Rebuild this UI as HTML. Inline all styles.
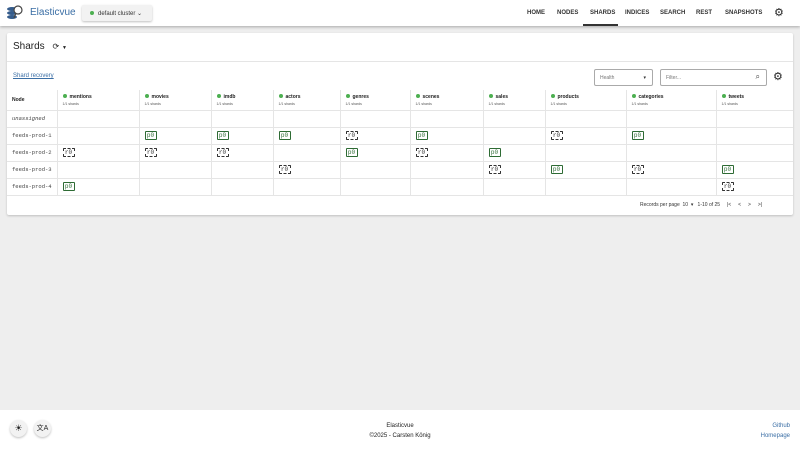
<!DOCTYPE html>
<html><head><meta charset="utf-8"><style>
*{box-sizing:border-box;margin:0;padding:0}
body{width:800px;height:450px;background:#eeeeee;font-family:"Liberation Sans",sans-serif;position:relative;overflow:hidden;color:#222}
.top{position:absolute;left:0;top:0;width:800px;height:26px;background:#fff;box-shadow:0 1px 3px rgba(0,0,0,.3)}
.abs{position:absolute}
.nav{font-size:6px;font-weight:bold;color:#333;top:10px}
.card{position:absolute;left:7px;top:33px;width:786px;height:182px;background:#fff;box-shadow:0 1px 2px rgba(0,0,0,.2);border-radius:2px}
table{position:absolute;left:0;top:57px;border-collapse:collapse;table-layout:fixed}
td{border-bottom:1px solid #e5e5e5;border-left:1px solid #e5e5e5;height:17px;font-size:5px;padding-left:5px;vertical-align:middle}
td:first-child{border-left:none;font-family:"Liberation Mono",monospace;font-size:5.5px;color:#444}
tr.h td{height:20px;font-family:"Liberation Sans",sans-serif}
.n{font-weight:bold;font-size:5px;color:#222}
.n:before{content:"";display:inline-block;width:4px;height:4px;border-radius:50%;background:#4caf50;margin-right:3px;vertical-align:middle}
.s{font-size:3.5px;color:#555;margin-top:2px}
.p,.r{display:inline-block;font-family:"Liberation Mono",monospace;font-size:6px;width:12px;height:9px;text-align:center;border-radius:1px;line-height:7px}
.p{border:1px solid #2e6b34;color:#2e6b34}
.r{border:1px dashed #333;color:#333}
</style></head><body>
<div class="top">
<svg class="abs" style="left:6px;top:4px" width="18" height="18" viewBox="0 0 18 18"><ellipse cx="6" cy="5" rx="5" ry="2" fill="#355c8c"/><ellipse cx="6" cy="9" rx="5" ry="2" fill="#355c8c"/><ellipse cx="6" cy="13" rx="5" ry="2" fill="#355c8c"/><circle cx="12" cy="6" r="4" fill="#fff" stroke="#444" stroke-width="1.2"/><line x1="10" y1="9" x2="8" y2="14" stroke="#444" stroke-width="1.3"/></svg>
<div class="abs" style="left:30px;top:7px;font-size:10px;color:#3a6ea5">Elasticvue</div>
<div class="abs" style="left:82px;top:5px;width:70px;height:16px;background:#f2f2f2;border-radius:2px;box-shadow:0 1px 2px rgba(0,0,0,.25);font-size:6px;color:#333;padding:5px 0 0 8px"><span style="display:inline-block;width:4px;height:4px;border-radius:50%;background:#4caf50;margin-right:4px"></span>default cluster ⌄</div>
<div class="abs nav" style="left:527px">HOME</div>
<div class="abs nav" style="left:557px">NODES</div>
<div class="abs nav" style="left:590px">SHARDS</div>
<div class="abs" style="left:583px;top:24px;width:35px;height:2px;background:#333"></div>
<div class="abs nav" style="left:625px">INDICES</div>
<div class="abs nav" style="left:660px">SEARCH</div>
<div class="abs nav" style="left:696px">REST</div>
<div class="abs nav" style="left:725px">SNAPSHOTS</div>
<div class="abs" style="left:774px;top:6px;font-size:11px;color:#222">⚙</div>
</div>
<div class="card">
<div class="abs" style="left:6px;top:8px;font-size:10px;color:#222">Shards <span style="font-size:8px;margin-left:5px">⟳</span> <span style="font-size:5px">▼</span></div>
<div class="abs" style="left:0;top:28px;width:786px;height:1px;background:#e5e5e5"></div>
<div class="abs" style="left:6px;top:40px;font-size:6px;color:#3a6ea5;text-decoration:underline">Shard recovery</div>
<div class="abs" style="left:587px;top:36px;width:59px;height:17px;border:1px solid #aaa;border-radius:2px;font-size:5px;color:#777;padding:5px 0 0 5px">Health<span style="position:absolute;right:6px;top:5px;color:#333">▾</span></div>
<div class="abs" style="left:653px;top:36px;width:107px;height:17px;border:1px solid #aaa;border-radius:2px;font-size:5px;color:#777;padding:5px 0 0 5px">Filter...<span style="position:absolute;right:6px;top:2px;font-size:8px;color:#444">⌕</span></div>
<div class="abs" style="left:766px;top:37px;font-size:11px;color:#222">⚙</div>
<table>
<colgroup><col style="width:50px"><col style="width:82px"><col style="width:72px"><col style="width:62px"><col style="width:67px"><col style="width:70px"><col style="width:73px"><col style="width:62px"><col style="width:81px"><col style="width:90px"><col style="width:77px"></colgroup>
<tr class="h"><td style="font-family:'Liberation Sans',sans-serif;font-size:5px;font-weight:bold;color:#222">Node</td>
<td><div class="n">mentions</div><div class="s">1/1 shards</div></td>
<td><div class="n">movies</div><div class="s">1/1 shards</div></td>
<td><div class="n">imdb</div><div class="s">1/1 shards</div></td>
<td><div class="n">actors</div><div class="s">1/1 shards</div></td>
<td><div class="n">genres</div><div class="s">1/1 shards</div></td>
<td><div class="n">scenes</div><div class="s">1/1 shards</div></td>
<td><div class="n">sales</div><div class="s">1/1 shards</div></td>
<td><div class="n">products</div><div class="s">1/1 shards</div></td>
<td><div class="n">categories</div><div class="s">1/1 shards</div></td>
<td><div class="n">tweets</div><div class="s">1/1 shards</div></td></tr>
<tr><td><i>unassigned</i></td><td></td><td></td><td></td><td></td><td></td><td></td><td></td><td></td><td></td><td></td></tr>
<tr><td>feeds-prod-1</td><td></td><td><span class="p">p0</span></td><td><span class="p">p0</span></td><td><span class="p">p0</span></td><td><span class="r">r0</span></td><td><span class="p">p0</span></td><td></td><td><span class="r">r0</span></td><td><span class="p">p0</span></td><td></td></tr>
<tr><td>feeds-prod-2</td><td><span class="r">r0</span></td><td><span class="r">r0</span></td><td><span class="r">r0</span></td><td></td><td><span class="p">p0</span></td><td><span class="r">r0</span></td><td><span class="p">p0</span></td><td></td><td></td><td></td></tr>
<tr><td>feeds-prod-3</td><td></td><td></td><td></td><td><span class="r">r0</span></td><td></td><td></td><td><span class="r">r0</span></td><td><span class="p">p0</span></td><td><span class="r">r0</span></td><td><span class="p">p0</span></td></tr>
<tr><td>feeds-prod-4</td><td><span class="p">p0</span></td><td></td><td></td><td></td><td></td><td></td><td></td><td></td><td></td><td><span class="r">r0</span></td></tr>
</table>
<div class="abs" style="left:633px;top:169px;font-size:5px;color:#333;white-space:nowrap">Records per page &nbsp;10 &nbsp;▾ &nbsp; 1-10 of 25 &nbsp;&nbsp;&nbsp; |&lt; &nbsp;&nbsp;&nbsp; &lt; &nbsp;&nbsp;&nbsp; &gt; &nbsp;&nbsp;&nbsp; &gt;|</div>
</div>
<div class="abs" style="left:0;top:410px;width:800px;height:40px;background:#fff"></div>
<div class="abs" style="left:10px;top:420px;width:17px;height:17px;border-radius:50%;background:#f2f2f2;box-shadow:0 1px 2px rgba(0,0,0,.25);font-size:9px;text-align:center;line-height:17px">☀</div>
<div class="abs" style="left:34px;top:420px;width:17px;height:17px;border-radius:50%;background:#f2f2f2;box-shadow:0 1px 2px rgba(0,0,0,.25);font-size:7px;text-align:center;line-height:17px">文A</div>
<div class="abs" style="left:0;top:421px;width:800px;text-align:center;font-size:6px;color:#222;line-height:10px">Elasticvue<br>©2025 - Carsten König</div>
<div class="abs" style="right:10px;top:421px;text-align:right;font-size:6px;color:#3a6ea5;line-height:10px">Github<br>Homepage</div>
</body></html>
